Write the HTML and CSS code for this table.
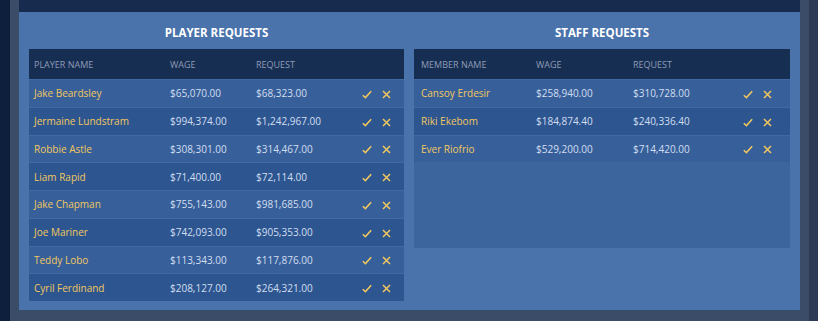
FILE: index.html
```html
<!DOCTYPE html>
<html>
<head>
<meta charset="utf-8">
<link rel="stylesheet" href="styles.css">
</head>
<body>
<div class="frame">
  <div class="edge-dark"></div>
  <div class="edge-gray"></div>
  <div class="main">
    <div class="topbar"></div>
    <div class="panel">
      <section class="block">
        <h2 class="title">PLAYER REQUESTS</h2>
        <div class="table players">
          <div class="row head"><span class="c-name">PLAYER NAME</span><span class="c-wage">WAGE</span><span class="c-req">REQUEST</span><span class="c-act"></span></div>
          <div class="row"><span class="c-name">Jake Beardsley</span><span class="c-wage">$65,070.00</span><span class="c-req">$68,323.00</span><span class="c-act"><svg class="ic" viewBox="0 0 10 9"><path d="M0.8 5.2 L3.4 7.6 L9.2 1.2"/></svg><svg class="ic x" viewBox="0 0 9 9"><path d="M1 1 L8 8 M8 1 L1 8"/></svg></span></div>
          <div class="row"><span class="c-name">Jermaine Lundstram</span><span class="c-wage">$994,374.00</span><span class="c-req">$1,242,967.00</span><span class="c-act"><svg class="ic" viewBox="0 0 10 9"><path d="M0.8 5.2 L3.4 7.6 L9.2 1.2"/></svg><svg class="ic x" viewBox="0 0 9 9"><path d="M1 1 L8 8 M8 1 L1 8"/></svg></span></div>
          <div class="row"><span class="c-name">Robbie Astle</span><span class="c-wage">$308,301.00</span><span class="c-req">$314,467.00</span><span class="c-act"><svg class="ic" viewBox="0 0 10 9"><path d="M0.8 5.2 L3.4 7.6 L9.2 1.2"/></svg><svg class="ic x" viewBox="0 0 9 9"><path d="M1 1 L8 8 M8 1 L1 8"/></svg></span></div>
          <div class="row"><span class="c-name">Liam Rapid</span><span class="c-wage">$71,400.00</span><span class="c-req">$72,114.00</span><span class="c-act"><svg class="ic" viewBox="0 0 10 9"><path d="M0.8 5.2 L3.4 7.6 L9.2 1.2"/></svg><svg class="ic x" viewBox="0 0 9 9"><path d="M1 1 L8 8 M8 1 L1 8"/></svg></span></div>
          <div class="row"><span class="c-name">Jake Chapman</span><span class="c-wage">$755,143.00</span><span class="c-req">$981,685.00</span><span class="c-act"><svg class="ic" viewBox="0 0 10 9"><path d="M0.8 5.2 L3.4 7.6 L9.2 1.2"/></svg><svg class="ic x" viewBox="0 0 9 9"><path d="M1 1 L8 8 M8 1 L1 8"/></svg></span></div>
          <div class="row"><span class="c-name">Joe Mariner</span><span class="c-wage">$742,093.00</span><span class="c-req">$905,353.00</span><span class="c-act"><svg class="ic" viewBox="0 0 10 9"><path d="M0.8 5.2 L3.4 7.6 L9.2 1.2"/></svg><svg class="ic x" viewBox="0 0 9 9"><path d="M1 1 L8 8 M8 1 L1 8"/></svg></span></div>
          <div class="row"><span class="c-name">Teddy Lobo</span><span class="c-wage">$113,343.00</span><span class="c-req">$117,876.00</span><span class="c-act"><svg class="ic" viewBox="0 0 10 9"><path d="M0.8 5.2 L3.4 7.6 L9.2 1.2"/></svg><svg class="ic x" viewBox="0 0 9 9"><path d="M1 1 L8 8 M8 1 L1 8"/></svg></span></div>
          <div class="row"><span class="c-name">Cyril Ferdinand</span><span class="c-wage">$208,127.00</span><span class="c-req">$264,321.00</span><span class="c-act"><svg class="ic" viewBox="0 0 10 9"><path d="M0.8 5.2 L3.4 7.6 L9.2 1.2"/></svg><svg class="ic x" viewBox="0 0 9 9"><path d="M1 1 L8 8 M8 1 L1 8"/></svg></span></div>
        </div>
      </section>
      <section class="block">
        <h2 class="title">STAFF REQUESTS</h2>
        <div class="table staff">
          <div class="row head"><span class="c-name">MEMBER NAME</span><span class="c-wage">WAGE</span><span class="c-req">REQUEST</span><span class="c-act"></span></div>
          <div class="row"><span class="c-name">Cansoy Erdesir</span><span class="c-wage">$258,940.00</span><span class="c-req">$310,728.00</span><span class="c-act"><svg class="ic" viewBox="0 0 10 9"><path d="M0.8 5.2 L3.4 7.6 L9.2 1.2"/></svg><svg class="ic x" viewBox="0 0 9 9"><path d="M1 1 L8 8 M8 1 L1 8"/></svg></span></div>
          <div class="row"><span class="c-name">Riki Ekebom</span><span class="c-wage">$184,874.40</span><span class="c-req">$240,336.40</span><span class="c-act"><svg class="ic" viewBox="0 0 10 9"><path d="M0.8 5.2 L3.4 7.6 L9.2 1.2"/></svg><svg class="ic x" viewBox="0 0 9 9"><path d="M1 1 L8 8 M8 1 L1 8"/></svg></span></div>
          <div class="row"><span class="c-name">Ever Riofrio</span><span class="c-wage">$529,200.00</span><span class="c-req">$714,420.00</span><span class="c-act"><svg class="ic" viewBox="0 0 10 9"><path d="M0.8 5.2 L3.4 7.6 L9.2 1.2"/></svg><svg class="ic x" viewBox="0 0 9 9"><path d="M1 1 L8 8 M8 1 L1 8"/></svg></span></div>
        </div>
      </section>
    </div>
    <div class="bottombar"></div>
  </div>
  <div class="edge-gray"></div>
  <div class="edge-dark2"></div>
</div>
</body>
</html>
```

FILE: styles.css
```css
* { box-sizing: border-box; }
html, body { margin: 0; padding: 0; }
body {
  width: 818px;
  height: 321px;
  overflow: hidden;
  font-family: "Open Sans", "Noto Sans", sans-serif;
  background: #3b4c68;
}
.frame {
  display: flex;
  height: 321px;
}
.edge-dark { width: 10px; background: #0e1f3e; }
.edge-gray { width: 9px; background: #3b4c68; }
.edge-dark2 { width: 9px; background: #2e3b55; }
.main {
  width: 781px;
  display: flex;
  flex-direction: column;
}
.topbar { height: 12px; background: #172b4e; }
.panel {
  height: 298px;
  background: #4a73ab;
  display: flex;
  gap: 10px;
  padding: 0 10px 0 10px;
}
.bottombar { flex: 1; background: #3b4c68; }
.block { display: flex; flex-direction: column; }
.block:first-child { width: 375px; }
.block:last-child { width: 376px; }
.title {
  margin: 0;
  height: 37px;
  padding-top: 13px;
  text-align: center;
  color: #ffffff;
  font-size: 11.5px;
  font-weight: 700;
  line-height: 16px;
}
.table {
  display: flex;
  flex-direction: column;
}
.staff { height: 199px; background: #3c659e; }
.row {
  display: flex;
  align-items: center;
  height: 27.75px;
  font-size: 10px;
  color: #d3def0;
  background: #37609a;
  border-top: 1px solid #3f6aa4;
}
.row:nth-child(odd) { background: #2d5690; }
.row.head {
  height: 30px;
  background: #172e53;
  border-top: none;
  color: #8e9cb6;
  font-size: 9px;
}
.c-name { color: #f2c75e; }
.head .c-name { color: #8e9cb6; }
.players .c-name { width: 141px; padding-left: 5px; }
.players .c-wage { width: 86px; }
.players .c-req { width: 106px; }
.staff .c-name { width: 122px; padding-left: 7px; }
.staff .c-wage { width: 97px; }
.staff .c-req { width: 110px; }
.c-act { display: flex; align-items: center; gap: 10px; }
.ic {
  width: 10px;
  height: 9px;
  fill: none;
  stroke: #f2c75e;
  stroke-width: 1.5;
  display: block;
  margin-top: 2px;
}
.ic.x { width: 9px; height: 9px; }
```
